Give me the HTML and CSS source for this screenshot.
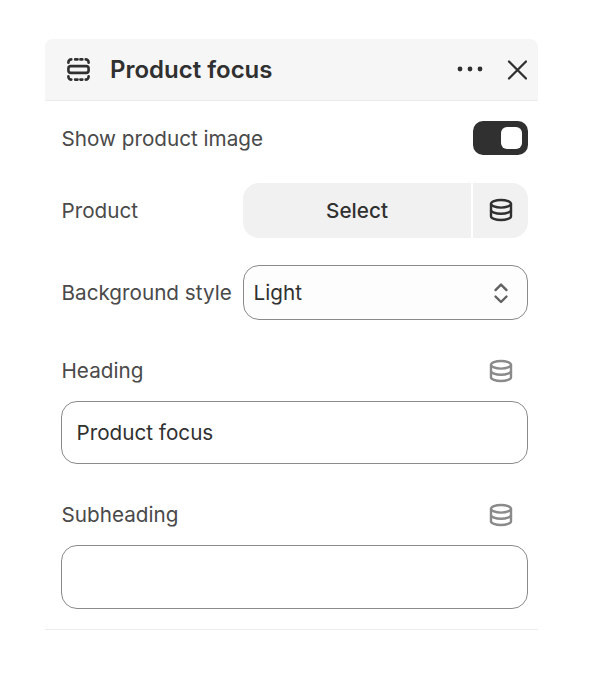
FILE: index.html
```html
<!DOCTYPE html>
<html lang="en">
<head>
  <meta charset="UTF-8" />
  <meta name="viewport" content="width=device-width, initial-scale=1" />
  <title>Product focus</title>
  <link rel="stylesheet" href="styles.css">
</head>
<body>

<div class="panel">
  <div class="panel-header">
    <svg class="section-icon" width="25" height="25" viewBox="0 0 26 26" fill="none" stroke="#303030" stroke-width="2.700" stroke-linecap="round">
      <rect x="2.500" y="9.500" width="21" height="7" rx="2.500" />
      <path d="M2.500 6v-.5a3 3 0 0 1 3-3" />
      <path d="M9.500 2.500h2.500M15 2.500h2" />
      <path d="M20.500 2.500a3 3 0 0 1 3 3v.5" />
      <path d="M2.500 20v.5a3 3 0 0 0 3 3" />
      <path d="M9.500 23.500h2.500M15 23.500h2" />
      <path d="M20.500 23.500a3 3 0 0 0 3-3v-.5" />
    </svg>
    <h1 class="panel-title">Product focus</h1>
    <svg class="more-icon" width="26" height="6" viewBox="0 0 26 6" fill="#303030">
      <circle cx="3" cy="3" r="2.400" />
      <circle cx="13" cy="3" r="2.400" />
      <circle cx="23" cy="3" r="2.400" />
    </svg>
    <svg class="close-icon" width="20" height="20" viewBox="0 0 20 20" fill="none" stroke="#303030" stroke-width="2.300" stroke-linecap="round">
      <path d="M2 1.500l17 17M19 1.500l-17 17" />
    </svg>
  </div>

  <div class="panel-body">
    <div class="row row-toggle">
      <span class="label">Show product image</span>
      <div class="toggle"><span class="toggle-knob"></span></div>
    </div>

    <div class="row row-product">
      <span class="label">Product</span>
      <div class="select-group">
        <button class="select-button">Select</button>
        <button class="source-button">
          <svg class="db-icon" width="24" height="24" viewBox="0 0 24 24" fill="none" stroke="#303030" stroke-width="2.400">
            <ellipse cx="12" cy="5.800" rx="10" ry="3.800" />
            <path d="M2 5.800v12.400c0 2.100 4.500 3.800 10 3.800s10-1.700 10-3.800V5.800" />
            <path d="M2 12c0 2.100 4.500 3.800 10 3.800s10-1.700 10-3.800" />
          </svg>
        </button>
      </div>
    </div>

    <div class="row row-style">
      <span class="label">Background style</span>
      <div class="dropdown">
        <span>Light</span>
        <svg width="16" height="24" viewBox="0 0 16 24" fill="none" stroke="#616161" stroke-width="2.400" stroke-linecap="round" stroke-linejoin="round">
          <path d="M2.500 9.100L8 3.600l5.500 5.500" />
          <path d="M2.500 15.500L8 21l5.500-5.500" />
        </svg>
      </div>
    </div>

    <div class="field">
      <div class="field-head">
        <span class="label">Heading</span>
        <svg width="24" height="24" viewBox="0 0 24 24" fill="none" stroke="#8a8a8a" stroke-width="2.400">
          <ellipse cx="12" cy="5.800" rx="10" ry="3.800" />
          <path d="M2 5.800v12.400c0 2.100 4.500 3.800 10 3.800s10-1.700 10-3.800V5.800" />
          <path d="M2 12c0 2.100 4.500 3.800 10 3.800s10-1.700 10-3.800" />
        </svg>
      </div>
      <div class="text-input">Product focus</div>
    </div>

    <div class="field">
      <div class="field-head">
        <span class="label">Subheading</span>
        <svg width="24" height="24" viewBox="0 0 24 24" fill="none" stroke="#8a8a8a" stroke-width="2.400">
          <ellipse cx="12" cy="5.800" rx="10" ry="3.800" />
          <path d="M2 5.800v12.400c0 2.100 4.500 3.800 10 3.800s10-1.700 10-3.800V5.800" />
          <path d="M2 12c0 2.100 4.500 3.800 10 3.800s10-1.700 10-3.800" />
        </svg>
      </div>
      <div class="text-input text-input-empty"></div>
    </div>
  </div>
</div>

</body>
</html>
```

FILE: styles.css
```css
body {
  font-family: Inter, "Liberation Sans", sans-serif;
  background: #fff;
  color: #303030;
  margin: 0;
  padding: 39px 0 0 45px;
}
.panel {
  width: 493px;
  height: 591px;
  border-bottom: 1px solid #ebebeb;
  box-sizing: border-box;
}
.panel-header {
  display: flex;
  align-items: center;
  height: 62px;
  box-sizing: border-box;
  padding: 0 11px 0 21px;
  background: #f6f6f6;
  border-bottom: 1px solid #ebebeb;
  border-top-left-radius: 8px;
  border-top-right-radius: 8px;
}
.panel-title {
  flex: 1;
  margin: 0 0 0 19px;
  font-size: 24px;
  font-weight: 600;
  line-height: 32px;
}
.more-icon {
  margin: 0 24px 2px 0;
}
.panel-body {
  padding: 0 10px 0 16px;
}
.row {
  display: flex;
  align-items: center;
  justify-content: space-between;
  padding-left: 0.500px;
}
.label {
  margin-top: 1px;
  font-size: 20.700px;
  line-height: 30px;
  color: #4a4a4a;
}
.row-toggle {
  height: 74px;
}
.toggle {
  display: flex;
  align-items: center;
  justify-content: flex-end;
  width: 55px;
  height: 34px;
  box-sizing: border-box;
  padding-right: 6px;
  background: #303030;
  border-radius: 10px;
}
.toggle-knob {
  width: 21px;
  height: 22px;
  background: #fff;
  border-radius: 6px;
}
.row-product {
  height: 55px;
  margin-top: 8px;
}
.select-group {
  display: flex;
  gap: 2px;
  width: 285px;
  height: 55px;
}
.select-group button {
  border: none;
  background: #f1f1f1;
  color: #303030;
  font-family: inherit;
  cursor: pointer;
}
.select-button {
  flex: 1;
  padding: 0;
  font-size: 20.700px;
  font-weight: 550;
  border-radius: 16px 0 0 16px;
}
.source-button {
  display: flex;
  align-items: center;
  justify-content: center;
  width: 55px;
  padding: 0 0 2px;
  border-radius: 0 16px 16px 0;
}
.row-style {
  margin-top: 27px;
}
.dropdown {
  display: flex;
  align-items: center;
  justify-content: space-between;
  width: 285px;
  height: 55px;
  box-sizing: border-box;
  padding: 0 18px 0 9.500px;
  background: #fdfdfd;
  border: 1.500px solid #8a8a8a;
  border-radius: 16px;
  font-size: 20.700px;
}
.field {
  margin-top: 36px;
}
.field-head {
  display: flex;
  align-items: center;
  justify-content: space-between;
  height: 30px;
  padding: 0 15px 0 0.500px;
}
.field-head .label {
  margin-top: 0;
}
.text-input {
  height: 63px;
  box-sizing: border-box;
  margin-top: 15px;
  padding: 0 14.500px;
  border: 1.500px solid #8a8a8a;
  border-radius: 16px;
  font-size: 20.700px;
  line-height: 61px;
  background: #fff;
}
.text-input-empty {
  height: 64px;
}
```
